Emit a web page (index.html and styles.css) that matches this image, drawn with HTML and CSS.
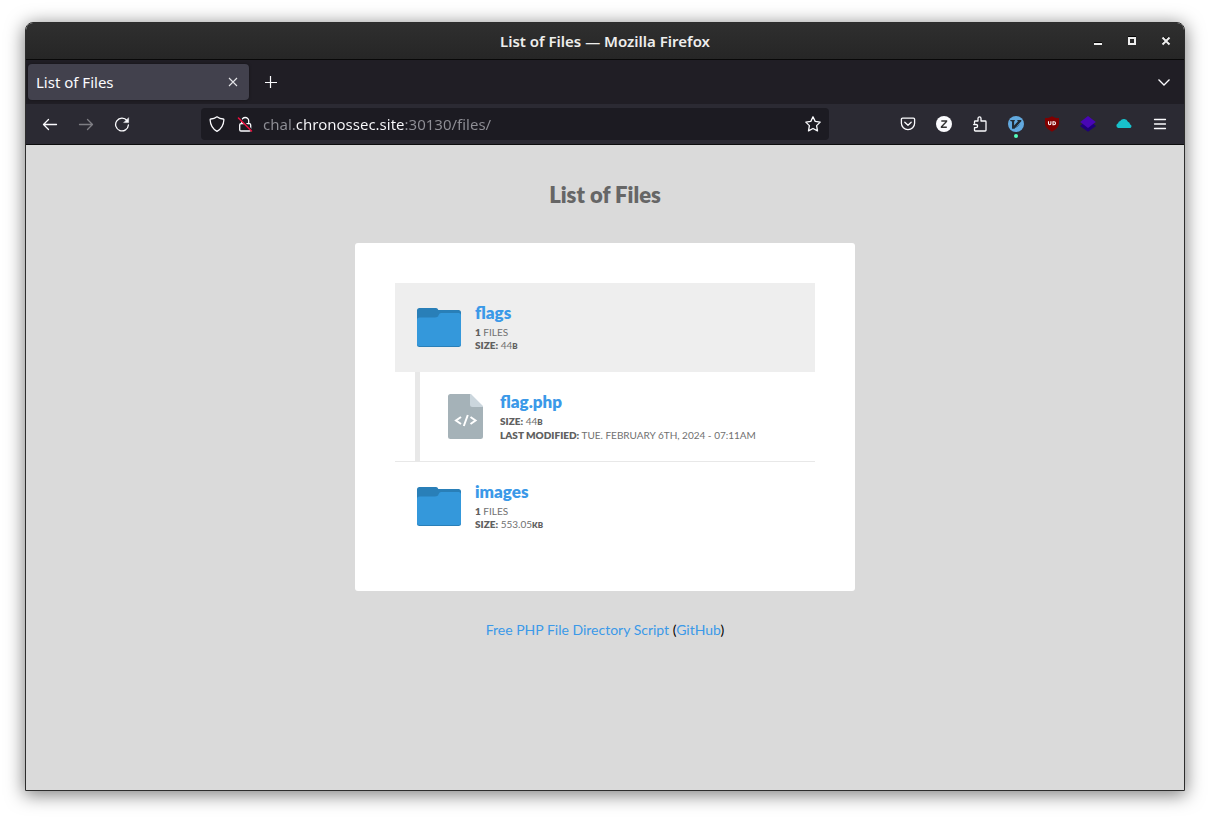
FILE: index.html
```html
<!DOCTYPE html>
<html lang="en">
<head>
<meta charset="utf-8">
<title>List of Files</title>
<link rel="stylesheet" href="styles.css">
</head>
<body>
<div class="window">
  <header class="titlebar">
    <span class="titlebar-text">List of Files — Mozilla Firefox</span>
    <div class="window-controls">
      <button class="wm-button" aria-label="Minimize"><svg width="10" height="10" shape-rendering="crispEdges"><path d="M1 7h8v2H1z" fill="#eee"/><path d="M1 6h8v1H1z" fill="#050505"/></svg></button>
      <button class="wm-button" aria-label="Maximize"><svg width="10" height="10" shape-rendering="crispEdges"><path d="M1 0h8v1H1z" fill="#050505"/><path d="M2 2h6v6H2z" fill="none" stroke="#eee" stroke-width="2"/></svg></button>
      <button class="wm-button" aria-label="Close"><svg width="10" height="10"><path d="M2 1l6 6M8 1l-6 6" stroke="#050505" stroke-width="2"/><path d="M1.500 1.500l7 7M8.500 1.500l-7 7" stroke="#eee" stroke-width="2"/></svg></button>
    </div>
  </header>

  <div class="tabstrip">
    <div class="tab">
      <span class="tab-title">List of Files</span>
      <button class="tab-close" aria-label="Close tab"><svg width="10" height="10"><path d="M1 1l8 8M9 1l-8 8" stroke="#e4e4e8" stroke-width="1.1"/></svg></button>
    </div>
    <button class="strip-button" aria-label="New tab"><svg width="14" height="14"><path d="M6.500 1v12M1 7.500h12" stroke="#fbfbfe" stroke-width="1.2"/></svg></button>
    <button class="strip-button strip-last" aria-label="List all tabs"><svg width="14" height="14"><path d="M1.500 4.500L7 10l5.500-5.500" fill="none" stroke="#fbfbfe" stroke-width="1.3"/></svg></button>
  </div>

  <nav class="toolbar">
    <button class="tool" aria-label="Back"><svg class="line" width="16" height="16"><path d="M14.500 8.500h-13M6.500 3.500l-5 5 5 5"/></svg></button>
    <button class="tool tool-off" aria-label="Forward" disabled><svg class="line" width="16" height="16"><path d="M1.500 8.500h13M9.500 3.500l5 5-5 5"/></svg></button>
    <button class="tool" aria-label="Reload"><svg class="line" width="16" height="16"><path d="M13 4.500A6.400 6.400 0 1 0 14.400 9"/><path d="M14.600 2v4.600H10z" fill="#fbfbfe" stroke-width=".5"/></svg></button>

    <div class="urlbar">
      <button class="url-icon" aria-label="Tracking protection"><svg class="line" width="16" height="16"><path d="M8 .8c2 1.500 4 2.100 6.200 2.200.5.100.7.300.7.800C14.600 8.800 12.500 13 8 15.300 3.500 13 1.400 8.800 1.100 3.800c0-.5.200-.7.700-.8C4 2.900 6 2.300 8 .8z"/></svg></button>
      <button class="url-icon" aria-label="Connection not secure"><svg class="line" width="16" height="16"><rect x="2.700" y="7.700" width="11" height="7.300" rx="1.300"/><path d="M4.700 7.500V5a3.500 3.500 0 0 1 7 0v2.500"/><path d="M2.500 2L15 14.500" stroke="#1c1b22" stroke-width="2"/><path d="M1.500 2l13 13" stroke="#f01040" stroke-width="1.500"/></svg></button>
      <input class="url-input" type="text" aria-label="Address" value="chal.chronossec.site:30130/files/">
      <button class="url-icon" aria-label="Bookmark this page"><svg class="line" width="16" height="16"><path d="M8 .8l2.200 4.600 5 .7-3.600 3.500.9 5.300L8 12.500l-4.500 2.400.9-5.300L.8 6.100l5-.7z"/></svg></button>
    </div>

    <button class="tool" aria-label="Pocket"><svg class="line" width="16" height="16"><path d="M2.500 2.200h11c.7 0 1.100.4 1.100 1.100v4a6.600 6.300 0 0 1-13.200 0v-4c0-.7.400-1.100 1.100-1.100z"/><path d="M4.800 6.200L8 9.200l3.200-3"/></svg></button>
    <button class="tool" aria-label="Zotero"><svg width="16" height="16"><circle cx="8" cy="8" r="8" fill="#fbfbfe"/><path d="M5.300 5h5.200v.5l-5 5.200v.5h5.300" fill="none" stroke="#333" stroke-width="1.400"/></svg></button>
    <button class="tool" aria-label="Extensions"><svg class="line" width="16" height="16"><path d="M2.500 7V5.800c0-.5.300-.8.800-.8H6V2.400a1.500 1.500 0 0 1 3 0V5h4.200c.5 0 .8.300.8.800v8.400c0 .5-.3.800-.8.800H3.300c-.5 0-.8-.3-.8-.8v-2.500h1.500a1.500 1.500 0 0 0 0-3.200H1.700"/></svg></button>
    <button class="tool" aria-label="Vimium"><svg width="16" height="16"><circle cx="8" cy="8" r="8" fill="#62a9df"/><path d="M2.300 4h4.500v1l-.7.500v4L10 5.200 9.300 4.800V4h4v1.200L6.500 12.800H4V5.400l-1.700-.5z" fill="#222c35"/><path d="M8.500 11.500l3-3" stroke="#3e7199"/></svg><span class="dot"></span></button>
    <button class="tool" aria-label="uBlock Origin"><svg width="16" height="16"><path d="M8 .3c2 1.300 4 1.800 7 1.800v5c0 4-3 6.600-7 8.600-4-2-7-4.600-7-8.600v-5C4 2.100 6 1.600 8 .3z" fill="#800000"/><path d="M4.500 5.300v2.300a1.200 1.200 0 0 0 2.400 0V5.300M9 5.800h1a1.500 1.500 0 0 1 0 3H9z" fill="none" stroke="#fff" stroke-width="1.100"/></svg></button>
    <button class="tool" aria-label="Layers extension"><svg width="16" height="16"><path d="M0 10l3-2.500h10l3 2.500-8 5.800z" fill="#1e0078"/><path d="M8 0l7.800 6L8 12 .2 6z" fill="#4806b4"/></svg></button>
    <button class="tool" aria-label="Cloud extension"><svg width="16" height="16"><path d="M2.300 12a2.500 2.500 0 0 1-.2-4.800 2.600 2.600 0 0 1 2.100-2.300 4.400 4.400 0 0 1 7.700.9 3.100 3.100 0 0 1 2.200 2.700A1.900 1.900 0 0 1 14.500 12z" fill="#18c1cb"/></svg></button>
    <button class="tool" aria-label="Open menu"><svg class="line" width="16" height="16"><path d="M2.500 3.500h11M2.500 8h11M2.500 12.500h11"/></svg></button>
  </nav>

  <main class="page">
    <h1 class="heading">List of Files</h1>
    <section class="card">
      <article class="entry entry-open">
        <svg class="folder" width="44" height="39"><use href="#folder-shape"/></svg>
        <div class="info">
          <a class="name" href="#flags">flags</a>
          <p class="meta"><b>1</b> Files</p>
          <p class="meta"><b>Size:</b> 44<b class="unit">b</b></p>
        </div>
      </article>
      <div class="nested">
        <article class="entry">
          <svg class="doc" width="35" height="45"><path d="M2.500 0H22l13 13v29.500a2.500 2.500 0 0 1-2.500 2.500h-30A2.500 2.500 0 0 1 0 42.500v-40A2.500 2.500 0 0 1 2.500 0z" fill="#a5b2b8"/><path d="M22 0h1l12 12v1H24.500a2.500 2.500 0 0 1-2.500-2.500z" fill="#cbd6dd"/><path d="M13 23l-5 3.500 5 3.500M22.500 23l5 3.500-5 3.500M19.800 21l-4 11" fill="none" stroke="#fff" stroke-width="2"/></svg>
          <div class="info">
            <a class="name" href="#flag.php">flag.php</a>
            <p class="meta"><b>Size:</b> 44<b class="unit">b</b></p>
            <p class="meta"><b>Last modified:</b> Tue. February 6th, 2024 - 07:11am</p>
          </div>
        </article>
      </div>
      <article class="entry entry-ruled">
        <svg class="folder" width="44" height="39"><g id="folder-shape"><path d="M2.500 0h16.500c1.200 0 1.800.7 2.300 2h20.200A2.500 2.500 0 0 1 44 4.500v32a2.500 2.500 0 0 1-2.500 2.500h-39A2.500 2.500 0 0 1 0 36.500v-34A2.500 2.500 0 0 1 2.500 0z" fill="#297fb8"/><path d="M2.500 9.500H18c2 0 3-.7 3.700-2.500.5-1.300 1.200-2 2.500-2h17.300A2.500 2.500 0 0 1 44 7.500v28a2.500 2.500 0 0 1-2.500 2.500h-39A2.500 2.500 0 0 1 0 35.500V12a2.500 2.500 0 0 1 2.500-2.500z" fill="#3498db"/></g></svg>
        <div class="info">
          <a class="name" href="#images">images</a>
          <p class="meta"><b>1</b> Files</p>
          <p class="meta"><b>Size:</b> 553.05<b class="unit">kb</b></p>
        </div>
      </article>
    </section>
    <footer class="credit"><a href="#script">Free PHP File Directory Script</a> (<a href="#github">GitHub</a>)</footer>
  </main>
</div>
</body>
</html>
```

FILE: styles.css
```css
* { box-sizing: border-box; }

body {
  margin: 0;
  min-height: 100vh;
  padding: 22px 25px 28px;
  display: flex;
  background: #fff;
  font-family: "Noto Sans", sans-serif;
}

button {
  display: flex;
  align-items: center;
  justify-content: center;
  padding: 0;
  border: 0;
  background: none;
}

.window {
  flex: 1;
  display: flex;
  flex-direction: column;
  border: 1px solid #2d2d2d;
  border-radius: 8px 8px 0 0;
  overflow: hidden;
  box-shadow: 0 3px 18px 1px rgba(0, 0, 0, 0.5);
}

.titlebar {
  display: grid;
  grid-template-columns: 1fr auto 1fr;
  align-items: center;
  height: 37px;
  background: linear-gradient(#2f2f2f, #262626);
  border-bottom: 1px solid #080808;
}

.titlebar-text {
  grid-column: 2;
  color: #eeeeec;
  font-size: 15px;
  line-height: 20px;
  font-weight: 600;
}

.window-controls {
  display: flex;
  justify-content: flex-end;
  padding-right: 1px;
}

.wm-button { width: 34px; height: 34px; }

.tabstrip {
  display: flex;
  align-items: center;
  height: 44px;
  padding: 0 2px;
  background: #201e25;
}

.tab {
  display: flex;
  align-items: center;
  justify-content: space-between;
  width: 221px;
  height: 36px;
  padding: 0 4px 0 8px;
  border-radius: 4px;
  background: #42414d;
  box-shadow: 0 0 3px rgba(0, 0, 0, 0.4);
}

.tab-title { color: #fbfbfe; font-size: 15px; line-height: 20px; }
.tab-close { width: 24px; height: 24px; }
.strip-button { width: 36px; height: 36px; margin-left: 4px; }
.strip-last { margin-left: auto; }

.toolbar {
  display: flex;
  align-items: center;
  height: 41px;
  padding: 0 6px;
  background: #2b2a33;
  border-bottom: 1px solid #0c0c0d;
}

.tool { position: relative; width: 36px; height: 32px; }
.tool-off { opacity: 0.4; }

.line {
  fill: none;
  stroke: #fbfbfe;
  stroke-width: 1.3;
  stroke-linejoin: round;
  stroke-linecap: round;
}

.dot {
  position: absolute;
  bottom: 2px;
  left: 16px;
  width: 4px;
  height: 4px;
  border-radius: 50%;
  background: #54ffbd;
}

.urlbar {
  display: flex;
  align-items: center;
  flex: 1;
  height: 32px;
  margin: 0 61px;
  padding: 0 2px;
  border-radius: 4px;
  background: #1c1b22;
}

.url-icon { width: 28px; height: 28px; }

.url-input {
  flex: 1;
  min-width: 0;
  height: 28px;
  margin-left: 4px;
  padding: 0;
  border: 0;
  outline: 0;
  font: 15px "Noto Sans", sans-serif;
  color: transparent;
  background: linear-gradient(90deg, #8f8f96 33px, #fbfbfe 33px 142px, #8f8f96 142px);
  -webkit-background-clip: text;
  background-clip: text;
}

.page {
  flex: 1;
  display: flex;
  flex-direction: column;
  align-items: center;
  padding: 36px 20px;
  background: #dadada;
  font-family: Lato, sans-serif;
}

.heading {
  margin: 0 0 34px;
  color: #666;
  font-size: 22px;
  line-height: 28px;
  font-weight: 800;
}

.card {
  width: 100%;
  max-width: 500px;
  padding: 40px;
  border-radius: 3px;
  background: #fff;
}

.entry {
  display: flex;
  align-items: center;
  gap: 14px;
  min-height: 89px;
  padding: 16px 22px;
}

.entry-open { background: #eee; }
.entry-ruled { min-height: 90px; border-top: 1px solid #e8e8e8; }

.nested {
  margin-left: 20px;
  border-left: 5px solid #e8e8e8;
}

.nested .entry { gap: 17px; padding: 16px 28px; }

.folder, .doc { flex: none; }

.name {
  display: block;
  margin-bottom: 4px;
  color: #3b99e8;
  font-size: 17px;
  line-height: 19px;
  font-weight: 800;
  text-decoration: none;
}

.meta {
  margin: 0;
  color: #707070;
  font-size: 10px;
  line-height: 13px;
  text-transform: uppercase;
}

.meta b { color: #606060; font-weight: 800; }
.meta .unit { font-size: 8px; }

.credit {
  margin-top: 30px;
  color: #000;
  font-size: 14px;
  line-height: 18px;
}

.credit a { color: #3b99e8; text-decoration: none; }
```
